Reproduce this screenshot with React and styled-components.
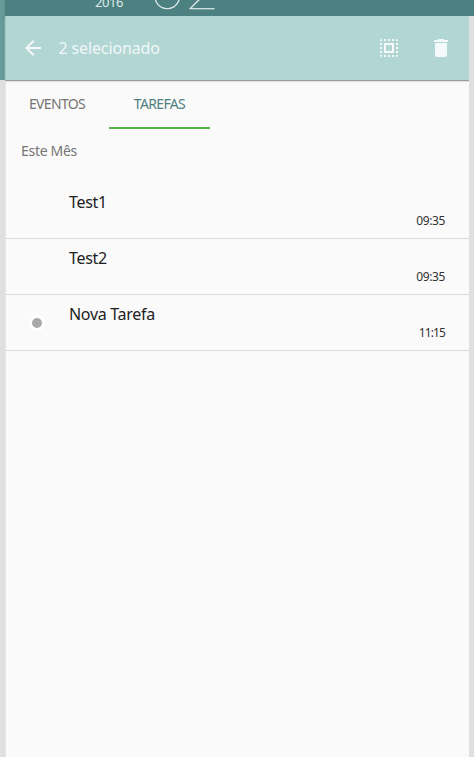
import styled, { createGlobalStyle } from 'styled-components';

const tasks = [
  { id: 1, title: 'Test1', time: '09:35' },
  { id: 2, title: 'Test2', time: '09:35' },
  { id: 3, title: 'Nova Tarefa', time: '11:15', marked: true },
];

const App = () => {
  return (
    <>
      <GlobalStyle />
      <Screen>
        <Edge>
          <EdgeHeader />
        </Edge>
        <Main>
          <DateHeader>
            <Year>2016</Year>
            <Day>02</Day>
          </DateHeader>
          <Panel>
            <Toolbar>
              <BackIcon viewBox="0 0 24 24">
                <path d="M20 11H7.83l5.59-5.59L12 4l-8 8 8 8 1.41-1.41L7.83 13H20v-2z" />
              </BackIcon>
              <ToolbarTitle>2 selecionado</ToolbarTitle>
              <ToolbarIcon viewBox="0 0 24 24">
                <path d="M3 5h2V3c-1.1 0-2 .9-2 2zm0 8h2v-2H3v2zm4 8h2v-2H7v2zM3 9h2V7H3v2zm10-6h-2v2h2V3zm6 0v2h2c0-1.1-.9-2-2-2zM5 21v-2H3c0 1.1.9 2 2 2zm-2-4h2v-2H3v2zM9 3H7v2h2V3zm2 18h2v-2h-2v2zm8-8h2v-2h-2v2zm0 8c1.1 0 2-.9 2-2h-2v2zm0-12h2V7h-2v2zm0 8h2v-2h-2v2zm-4 4h2v-2h-2v2zm0-16h2V3h-2v2zM7 17h10V7H7v10zm2-8h6v6H9V9z" />
              </ToolbarIcon>
              <ToolbarIcon viewBox="0 0 24 24">
                <path d="M6 19c0 1.1.9 2 2 2h8c1.1 0 2-.9 2-2V7H6v12zM19 4h-3.5l-1-1h-5l-1 1H5v2h14V4z" />
              </ToolbarIcon>
            </Toolbar>
            <Tabs>
              <Tab $width={104}>EVENTOS</Tab>
              <Tab $width={101} $active>TAREFAS</Tab>
            </Tabs>
            <SectionTitle>Este Mês</SectionTitle>
            <TaskList>
              {tasks.map((task) => (
                <TaskRow key={task.id}>
                  <Marker>{task.marked && <Dot />}</Marker>
                  <TaskTitle>{task.title}</TaskTitle>
                  <TaskTime $narrow={task.time.startsWith('11')}>{task.time}</TaskTime>
                </TaskRow>
              ))}
            </TaskList>
          </Panel>
        </Main>
      </Screen>
    </>
  );
};

const GlobalStyle = createGlobalStyle`
  * {
    box-sizing: border-box;
  }
  body {
    margin: 0;
    overflow: hidden;
    background-color: #e0e0e0;
    font-family: 'Noto Sans', sans-serif;
  }
`;

const Screen = styled.div`
  display: flex;
  width: 474px;
  height: 757px;
  overflow: hidden;
`;

const Edge = styled.div`
  width: 5px;
  flex-shrink: 0;
`;

const EdgeHeader = styled.div`
  height: 80px;
  background: linear-gradient(to right, #659e9a, #619592);
`;

const Main = styled.main`
  flex: 1;
  display: flex;
  flex-direction: column;
`;

const DateHeader = styled.header`
  display: flex;
  align-items: flex-end;
  height: 16px;
  padding-left: 90px;
  overflow: hidden;
  background-color: #4d8080;
  color: #dfeaea;
`;

const Year = styled.span`
  width: 56px;
  font-size: 13px;
  line-height: 18px;
  letter-spacing: -0.4px;
  margin-bottom: 5px;
`;

const Day = styled.span`
  font-family: Lato, sans-serif;
  font-size: 56px;
  font-weight: 100;
  line-height: 56px;
  letter-spacing: 2.5px;
  margin-bottom: 0;
  -webkit-text-stroke: 0.5px #dfeaea;
`;

const Panel = styled.section`
  width: 464px;
  flex: 1;
  background-color: #fafafa;
  box-shadow: inset 1px 0 #e6e6e6;
`;

const Toolbar = styled.div`
  display: flex;
  align-items: center;
  height: 64px;
  padding: 0 16px;
  background-color: #b2d6d4;
  box-shadow: inset 1px 0 #a6c8c6, 0 1px 0 #9b9b9b, 0 2px 1px #e0e0e0;
  color: rgba(255, 255, 255, 0.84);
`;

const BackIcon = styled.svg`
  width: 24px;
  height: 24px;
  fill: #f3faf9;
`;

const ToolbarTitle = styled.h1`
  flex: 1;
  margin: 0 0 0 13.5px;
  font-size: 16px;
  font-weight: 400;
  line-height: 24px;
  letter-spacing: -0.13px;
`;

const ToolbarIcon = styled.svg`
  width: 24px;
  height: 24px;
  fill: #f3faf9;

  & + & {
    margin-left: 28px;
  }
`;

const Tabs = styled.nav`
  display: flex;
  height: 49px;
`;

const Tab = styled.div`
  width: ${({ $width }) => $width}px;
  padding-top: 14px;
  text-align: center;
  font-size: 14px;
  line-height: 20px;
  letter-spacing: -0.65px;
  color: ${({ $active }) => ($active ? '#4d8080' : '#737373')};
  border-bottom: 2px solid ${({ $active }) => ($active ? '#54b345' : 'transparent')};
`;

const SectionTitle = styled.h2`
  height: 54px;
  margin: 0;
  padding: 12px 0 0 16px;
  font-size: 14px;
  font-weight: 400;
  line-height: 20px;
  letter-spacing: -0.3px;
  color: #757575;
`;

const TaskList = styled.ul`
  margin: 0;
  padding: 0;
  list-style: none;
`;

const TaskRow = styled.li`
  display: grid;
  grid-template-columns: 64px 1fr auto;
  height: 56px;
  padding-right: 24px;
  border-bottom: 1px solid #dadada;
`;

const Marker = styled.div`
  display: flex;
  justify-content: center;
  padding-top: 20px;
`;

const Dot = styled.span`
  width: 16px;
  height: 16px;
  border: 3px solid #fff;
  border-radius: 50%;
  background-color: #a9a9a9;
`;

const TaskTitle = styled.span`
  padding-top: 7px;
  font-size: 16px;
  line-height: 24px;
  letter-spacing: -0.3px;
  color: #212121;
`;

const TaskTime = styled.time`
  padding-top: 29px;
  font-size: 12px;
  line-height: 18px;
  letter-spacing: ${({ $narrow }) => ($narrow ? '-0.9px' : '-0.4px')};
  color: #333;
`;

export default App;
